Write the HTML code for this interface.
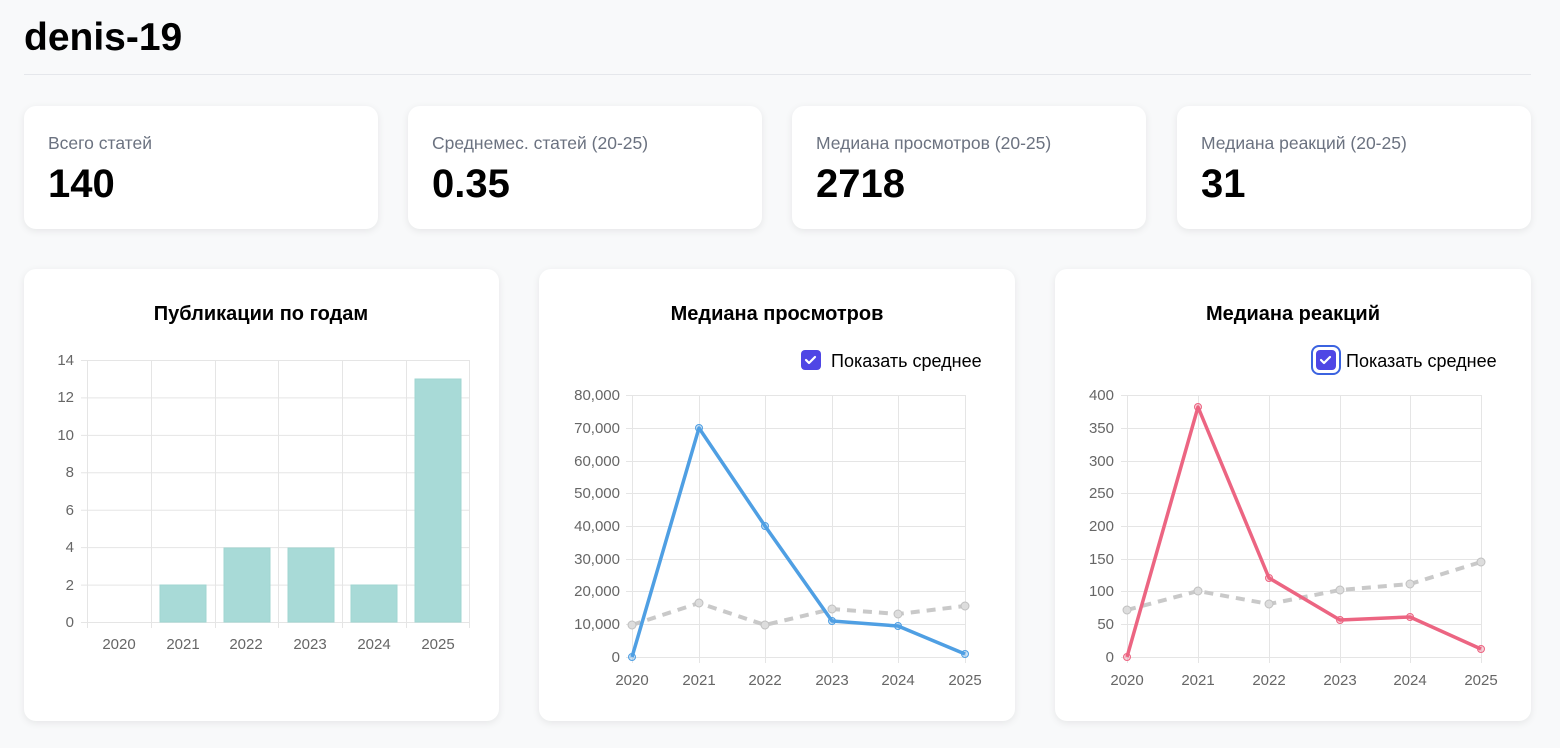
<!DOCTYPE html>
<html><head><meta charset="utf-8"><style>
*{margin:0;padding:0;box-sizing:border-box}
body{width:1560px;height:748px;background:#f8f9fa;font-family:"Liberation Sans",sans-serif;position:relative;overflow:hidden;color:#000}
h1{position:absolute;left:24px;top:16px;font-size:39px;font-weight:bold}
.hr{position:absolute;left:24px;top:74px;width:1507px;height:1px;background:#e5e7eb}
.card{position:absolute;background:#fff;border-radius:12px;box-shadow:0 2px 8px rgba(0,0,0,0.08)}
.lab{position:absolute;left:24px;top:27px;font-size:17.5px;color:#6b7280}
.val{position:absolute;left:24px;top:56px;font-size:40px;font-weight:bold}
svg{position:absolute;left:0;top:0}
</style></head><body>
<h1>denis-19</h1>
<div class="hr"></div>
<div class="card" style="left:24px;top:106px;width:354px;height:123px"><div class="lab">Всего статей</div><div class="val">140</div></div>
<div class="card" style="left:408px;top:106px;width:354px;height:123px"><div class="lab">Среднемес. статей (20-25)</div><div class="val">0.35</div></div>
<div class="card" style="left:792px;top:106px;width:354px;height:123px"><div class="lab">Медиана просмотров (20-25)</div><div class="val">2718</div></div>
<div class="card" style="left:1177px;top:106px;width:354px;height:123px"><div class="lab">Медиана реакций (20-25)</div><div class="val">31</div></div>
<div class="card" style="left:24px;top:269px;width:475px;height:452px"></div>
<div class="card" style="left:539px;top:269px;width:476px;height:452px"></div>
<div class="card" style="left:1055px;top:269px;width:476px;height:452px"></div>
<svg width="1560" height="748" font-family="Liberation Sans, sans-serif">
<g font-size="20" font-weight="bold" text-anchor="middle">
<text x="261" y="320">Публикации по годам</text>
<text x="777" y="320">Медиана просмотров</text>
<text x="1293" y="320">Медиана реакций</text>
</g>
<!-- chart1 -->
<g stroke="#e5e5e5" stroke-width="1">
<line x1="81" y1="360.5" x2="469" y2="360.5"/><line x1="81" y1="397.9" x2="469" y2="397.9"/><line x1="81" y1="435.4" x2="469" y2="435.4"/><line x1="81" y1="472.8" x2="469" y2="472.8"/><line x1="81" y1="510.2" x2="469" y2="510.2"/><line x1="81" y1="547.6" x2="469" y2="547.6"/><line x1="81" y1="585.1" x2="469" y2="585.1"/><line x1="81" y1="622.5" x2="469" y2="622.5"/>
<line x1="87.5" y1="360" x2="87.5" y2="628"/><line x1="151.5" y1="360" x2="151.5" y2="628"/><line x1="215.5" y1="360" x2="215.5" y2="628"/><line x1="278.5" y1="360" x2="278.5" y2="628"/><line x1="342.5" y1="360" x2="342.5" y2="628"/><line x1="406.5" y1="360" x2="406.5" y2="628"/><line x1="469.5" y1="360" x2="469.5" y2="628"/>
</g>
<g fill="#a8dad7" stroke="#a0d6d2">
<rect x="160" y="585" width="46" height="37"/><rect x="224" y="548" width="46" height="74"/><rect x="288" y="548" width="46" height="74"/><rect x="351" y="585" width="46" height="37"/><rect x="415" y="379" width="46" height="243"/>
</g>
<g font-size="15" fill="#666" text-anchor="end">
<text x="74" y="365">14</text><text x="74" y="402">12</text><text x="74" y="440">10</text><text x="74" y="477">8</text><text x="74" y="515">6</text><text x="74" y="552">4</text><text x="74" y="590">2</text><text x="74" y="627">0</text>
</g>
<g font-size="15" fill="#666" text-anchor="middle">
<text x="119" y="649">2020</text><text x="183" y="649">2021</text><text x="246" y="649">2022</text><text x="310" y="649">2023</text><text x="374" y="649">2024</text><text x="438" y="649">2025</text>
</g>
<!-- chart2 -->
<rect x="801" y="350" width="20" height="20" rx="4" fill="#4f46e5"/>
<path d="M806 360l3 3 6-6" stroke="#fff" stroke-width="2.2" fill="none" stroke-linecap="round" stroke-linejoin="round"/>
<text x="831" y="367" font-size="18">Показать среднее</text>
<g stroke="#e5e5e5">
<line x1="626" y1="395.5" x2="965" y2="395.5"/><line x1="626" y1="428.5" x2="965" y2="428.5"/><line x1="626" y1="461.5" x2="965" y2="461.5"/><line x1="626" y1="493.5" x2="965" y2="493.5"/><line x1="626" y1="526.5" x2="965" y2="526.5"/><line x1="626" y1="559.5" x2="965" y2="559.5"/><line x1="626" y1="591.5" x2="965" y2="591.5"/><line x1="626" y1="624.5" x2="965" y2="624.5"/><line x1="626" y1="657.5" x2="965" y2="657.5"/>
<line x1="632.5" y1="395" x2="632.5" y2="663"/><line x1="699.5" y1="395" x2="699.5" y2="663"/><line x1="765.5" y1="395" x2="765.5" y2="663"/><line x1="832.5" y1="395" x2="832.5" y2="663"/><line x1="898.5" y1="395" x2="898.5" y2="663"/><line x1="965.5" y1="395" x2="965.5" y2="663"/>
</g>
<polyline points="632,625 699,603 765,625 832,609 898,614 965,606" fill="none" stroke="#c9c9c9" stroke-width="4" stroke-dasharray="9,7"/>
<g fill="#ddd" stroke="#c0c0c0"><circle cx="632" cy="625" r="4"/><circle cx="699" cy="603" r="4"/><circle cx="765" cy="625" r="4"/><circle cx="832" cy="609" r="4"/><circle cx="898" cy="614" r="4"/><circle cx="965" cy="606" r="4"/></g>
<polyline points="632,657 699,428 765,526 832,621 898,626 965,654" fill="none" stroke="#4f9fe3" stroke-width="3.5" stroke-linejoin="round"/>
<g fill="rgba(79,159,227,0.3)" stroke="#4f9fe3"><circle cx="632" cy="657" r="3.5"/><circle cx="699" cy="428" r="3.5"/><circle cx="765" cy="526" r="3.5"/><circle cx="832" cy="621" r="3.5"/><circle cx="898" cy="626" r="3.5"/><circle cx="965" cy="654" r="3.5"/></g>
<g font-size="15" fill="#666" text-anchor="end">
<text x="620" y="400">80,000</text><text x="620" y="433">70,000</text><text x="620" y="466">60,000</text><text x="620" y="498">50,000</text><text x="620" y="531">40,000</text><text x="620" y="564">30,000</text><text x="620" y="596">20,000</text><text x="620" y="629">10,000</text><text x="620" y="662">0</text>
</g>
<g font-size="15" fill="#666" text-anchor="middle">
<text x="632" y="685">2020</text><text x="699" y="685">2021</text><text x="765" y="685">2022</text><text x="832" y="685">2023</text><text x="898" y="685">2024</text><text x="965" y="685">2025</text>
</g>
<!-- chart3 -->
<rect x="1312" y="346" width="28" height="28" rx="7" fill="none" stroke="#3b63e0" stroke-width="2"/>
<rect x="1316" y="350" width="20" height="20" rx="4" fill="#4f46e5"/>
<path d="M1321 360l3 3 6-6" stroke="#fff" stroke-width="2.2" fill="none" stroke-linecap="round" stroke-linejoin="round"/>
<text x="1346" y="367" font-size="18">Показать среднее</text>
<g stroke="#e5e5e5">
<line x1="1121" y1="395.5" x2="1481" y2="395.5"/><line x1="1121" y1="428.5" x2="1481" y2="428.5"/><line x1="1121" y1="461.5" x2="1481" y2="461.5"/><line x1="1121" y1="493.5" x2="1481" y2="493.5"/><line x1="1121" y1="526.5" x2="1481" y2="526.5"/><line x1="1121" y1="559.5" x2="1481" y2="559.5"/><line x1="1121" y1="591.5" x2="1481" y2="591.5"/><line x1="1121" y1="624.5" x2="1481" y2="624.5"/><line x1="1121" y1="657.5" x2="1481" y2="657.5"/>
<line x1="1127.5" y1="395" x2="1127.5" y2="663"/><line x1="1198.5" y1="395" x2="1198.5" y2="663"/><line x1="1269.5" y1="395" x2="1269.5" y2="663"/><line x1="1340.5" y1="395" x2="1340.5" y2="663"/><line x1="1410.5" y1="395" x2="1410.5" y2="663"/><line x1="1481.5" y1="395" x2="1481.5" y2="663"/>
</g>
<polyline points="1127,610 1198,591 1269,604 1340,590 1410,584 1481,562" fill="none" stroke="#c9c9c9" stroke-width="4" stroke-dasharray="9,7"/>
<g fill="#ddd" stroke="#c0c0c0"><circle cx="1127" cy="610" r="4"/><circle cx="1198" cy="591" r="4"/><circle cx="1269" cy="604" r="4"/><circle cx="1340" cy="590" r="4"/><circle cx="1410" cy="584" r="4"/><circle cx="1481" cy="562" r="4"/></g>
<polyline points="1127,657 1198,407 1269,578 1340,620 1410,617 1481,649" fill="none" stroke="#ec6582" stroke-width="3.5" stroke-linejoin="round"/>
<g fill="rgba(236,101,130,0.3)" stroke="#ec6582"><circle cx="1127" cy="657" r="3.5"/><circle cx="1198" cy="407" r="3.5"/><circle cx="1269" cy="578" r="3.5"/><circle cx="1340" cy="620" r="3.5"/><circle cx="1410" cy="617" r="3.5"/><circle cx="1481" cy="649" r="3.5"/></g>
<g font-size="15" fill="#666" text-anchor="end">
<text x="1114" y="400">400</text><text x="1114" y="433">350</text><text x="1114" y="466">300</text><text x="1114" y="498">250</text><text x="1114" y="531">200</text><text x="1114" y="564">150</text><text x="1114" y="596">100</text><text x="1114" y="629">50</text><text x="1114" y="662">0</text>
</g>
<g font-size="15" fill="#666" text-anchor="middle">
<text x="1127" y="685">2020</text><text x="1198" y="685">2021</text><text x="1269" y="685">2022</text><text x="1340" y="685">2023</text><text x="1410" y="685">2024</text><text x="1481" y="685">2025</text>
</g>
</svg>
</body></html>
